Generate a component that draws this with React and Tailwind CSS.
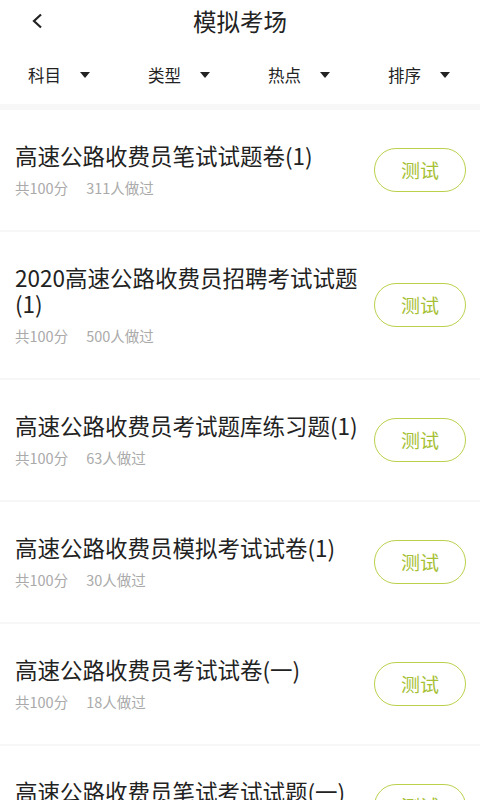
import React from 'react';

const exams = [
  { title: '高速公路收费员笔试试题卷(1)', score: 100, count: 311 },
  { title: '2020高速公路收费员招聘考试试题(1)', score: 100, count: 500 },
  { title: '高速公路收费员考试题库练习题(1)', score: 100, count: 63 },
  { title: '高速公路收费员模拟考试试卷(1)', score: 100, count: 30 },
  { title: '高速公路收费员考试试卷(一)', score: 100, count: 18 },
  { title: '高速公路收费员笔试考试试题(一)', score: 100, count: 12 },
];

const filters = ['科目', '类型', '热点', '排序'];

function Caret() {
  return (
    <svg width="10" height="6" viewBox="0 0 10 6" className="ml-[19px]">
      <path d="M0 0 L10 0 L5 6 Z" fill="#222" />
    </svg>
  );
}

export default function App() {
  return (
    <div
      className="w-[480px] h-[800px] overflow-hidden bg-[#f7f7f7]"
      style={{ fontFamily: '"Noto Sans CJK SC", "Noto Sans", sans-serif' }}
    >
      {/* Header */}
      <div className="bg-white">
        <div className="relative h-[42px] pt-[1px] flex items-center justify-center">
          <button className="absolute left-[30px] top-[13px] p-0">
            <svg width="14" height="16" viewBox="0 0 14 16">
              <path d="M11 1.5 L4 8 L11 14.5" fill="none" stroke="#222" strokeWidth="2.2" />
            </svg>
          </button>
          <h1 className="text-[23.5px] text-[#222] leading-none">模拟考场</h1>
        </div>
        <div className="h-[62px] pt-[4px] grid grid-cols-4">
          {filters.map((f) => (
            <div key={f} className="flex items-center pl-[28px]">
              <span className="text-[16.5px] text-[#222]">{f}</span>
              <Caret />
            </div>
          ))}
        </div>
      </div>

      {/* List */}
      <div className="mt-[6px] flex flex-col gap-[2px]">
        {exams.map((e) => (
          <div key={e.title} className="bg-white flex items-center pl-[15px] pr-[14px]">
            <div className="flex-1 pt-[32px] pb-[33px] pr-[12px]">
              <p className="text-[22.5px] leading-[26px] text-[#222]">{e.title}</p>
              <p className="mt-[11px] text-[14.5px] leading-[18px] text-[#aaa]">
                <span>共{e.score}分</span>
                <span className="ml-[18px]">{e.count}人做过</span>
              </p>
            </div>
            <button className="w-[92px] h-[44px] shrink-0 rounded-full border-[1.5px] border-[#bcd04c] text-[19px] text-[#a6c034]">
              测试
            </button>
          </div>
        ))}
      </div>
    </div>
  );
}
